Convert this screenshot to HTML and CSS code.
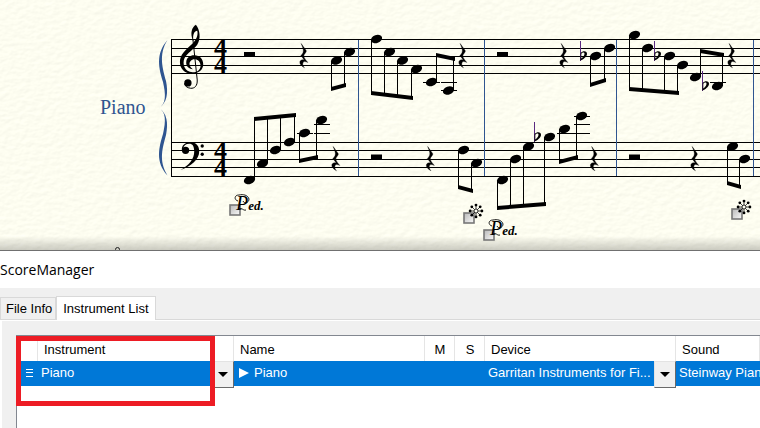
FILE: index.html
```html
<!DOCTYPE html>
<html lang="en">
<head>
    <meta charset="UTF-8">
    <meta name="viewport" content="width=device-width, initial-scale=1.0">
    <title>ScoreManager</title>
    <link rel="stylesheet" href="styles.css">
</head>
<body>
    <div class="score">
        <svg class="score-page" viewBox="0 0 760 250" role="img" aria-label="Piano score">
            <defs>
                <filter id="paper" x="0" y="0" width="100%" height="100%" color-interpolation-filters="sRGB">
                    <feTurbulence type="fractalNoise" baseFrequency="0.14 0.22" numOctaves="3" seed="4"/>
                    <feDiffuseLighting lighting-color="#fefef1" surfaceScale="0.12" diffuseConstant="1.15">
                        <feDistantLight azimuth="240" elevation="60"/>
                    </feDiffuseLighting>
                </filter>
                <linearGradient id="shade" x1="0" y1="0" x2="0" y2="1">
                    <stop offset="0" stop-color="#000" stop-opacity="0"/>
                    <stop offset="1" stop-color="#000" stop-opacity="0.2"/>
                </linearGradient>
                <linearGradient id="handleFill" x1="0" y1="0" x2="1" y2="1">
                    <stop offset="0" stop-color="#b8b8b8"/>
                    <stop offset="1" stop-color="#fafafa"/>
                </linearGradient>
                <ellipse id="note" rx="5.8" ry="4" transform="rotate(-20)"/>
                <rect id="half" width="11" height="4.5"/>
                <path id="rest" stroke="#000" transform="scale(.333)" d="M5 0L20 21C23 26 12 32 13 38C14 44 19 49 25 57C17 53 11 53 10 59C9 65 12 69 15 73C6 68 0 62 1 55C3 49 9 47 15 50L4 36C10 31 13 24 11 17C10 10 6 5 5 0Z"/>
                <g id="flat">
                    <path d="M.5 0V20" stroke="#5a2a80" fill="none"/>
                    <path fill-rule="evenodd" d="M.6 12C3 9.400 7.200 9.700 7 13C6.800 16 3.500 18 .4 19.800ZM1.300 12.800V17.600C3 16.400 4.600 14.600 4.500 12.600C4.400 10.800 2.500 11.200 1.300 12.800Z"/>
                </g>
                <g id="star">
                    <path d="M0-6V6M-6 0H6M-4.300-4.300L4.300 4.300M4.300-4.300L-4.300 4.300" stroke="#000" stroke-width="0.7"/>
                    <circle r="2" fill="#fffff3" stroke="#000" stroke-width="0.8"/>
                    <circle cy="-5.900" r="1.400"/><circle cy="5.900" r="1.400"/>
                    <circle cx="-5.900" r="1.400"/><circle cx="5.900" r="1.400"/>
                    <circle cx="-4.200" cy="-4.200" r="1.400"/><circle cx="4.200" cy="-4.200" r="1.400"/>
                    <circle cx="-4.200" cy="4.200" r="1.400"/><circle cx="4.200" cy="4.200" r="1.400"/>
                </g>
                <rect id="handle" x="1" y="1" width="10" height="10" fill="url(#handleFill)" stroke="#777" stroke-width="1.600"/>
                <path id="swash" fill="none" stroke="#000" stroke-width="0.9" d="M3 7C-1 6-1 1 4 1C8 0 13 1 14 5C14 9 9 10 8 7M4 15C7 13 8 17 11 16"/>
            </defs>

            <rect width="760" height="250" filter="url(#paper)"/>
            <rect y="236" width="760" height="14" fill="url(#shade)"/>

            <!-- staves -->
            <path class="line" d="M171 39.500H760M171 48.500H760M171 56.500H760M171 65.500H760M171 73.500H760M171 142.500H760M171 150.500H760M171 159.500H760M171 167.500H760M171 176.500H760M171.500 39V177"/>
            <path class="barline" d="M358.500 40V176M484.500 40V176M616.500 40V176M753.500 40V176"/>
            <path class="brace" d="M167.500 40C158 55 163 69 166 81C168.500 93 167 103 159 108C167 113 168.500 123 166 135C163 147 158 160 167.500 175.500C155 162 159 147 163 134C166 121 166 112 159 108C166 104 166 95 163 82C159 69 155 54 167.500 40Z"/>
            <text class="staff-name" x="100" y="114">Piano</text>

            <!-- clefs and time signature -->
            <g transform="translate(90 20) scale(.333)">
                <path d="M309 62C300 38 306 22 318 14C330 28 334 56 322 74C312 88 292 98 284 114C276 132 284 156 308 157C322 157 331 150 332 138C332 126 324 118 314 118C304 118 298 126 299 134C300 141 304 145 309 148C296 146 288 138 289 126C290 113 300 106 313 106C330 106 340 118 340 133C340 150 326 161 306 161C284 161 270 146 270 126C270 104 286 90 304 74C318 62 326 46 322 32C314 32 307 44 311 62Z"/>
                <path d="M309 58L322 180C323 198 314 206 302 205C292 204 284 198 284 190" fill="none" stroke="#000" stroke-width="3"/>
                <circle cx="294" cy="189" r="11"/>
            </g>
            <g transform="translate(90 110) scale(.333)">
                <path d="M276 122C274 106 286 97 302 97C320 97 328 110 328 124C328 150 302 170 272 180C298 165 313 148 313 124C313 108 308 101 298 101C288 101 281 107 280 114Z"/>
                <circle cx="287" cy="121" r="11"/>
                <circle cx="337" cy="108" r="5"/>
                <circle cx="337" cy="133" r="5"/>
            </g>
            <g class="meter">
                <text x="214" y="56">4</text>
                <text x="214" y="73">4</text>
                <text x="214" y="159">4</text>
                <text x="214" y="176">4</text>
            </g>

            <!-- ledger lines -->
            <path class="line" d="M423 82.500H440M441 82.500H457M441 90.500H457M710 82.500H726M297 133.500H313M314 133.500H330M314 124.500H330M557 133.500H590M574 124.500H590M574 116.500H590"/>

            <!-- treble staff -->
            <use href="#half" x="244" y="52"/>
            <use href="#rest" x="299.500" y="43.500"/>
            <use href="#note" x="336.500" y="60.500"/>
            <use href="#note" x="349.500" y="52"/>
            <path class="line" d="M331.500 61V89M344.500 53V85"/>
            <path d="M331 87L346 83V87L331 91Z"/>

            <use href="#note" x="376.500" y="39"/>
            <use href="#note" x="389.500" y="52"/>
            <use href="#note" x="402.500" y="60.500"/>
            <use href="#note" x="416.500" y="69"/>
            <path class="line" d="M371.500 40V93M384.500 53V94M397.500 61V96M411.500 70V97"/>
            <path d="M371 91L413 96V100L371 95Z"/>
            <use href="#note" x="431.500" y="82"/>
            <use href="#note" x="448.500" y="90.500"/>
            <path class="line" d="M436.500 55V82M453.500 58V90"/>
            <path d="M436 53L455 57V61L436 57Z"/>
            <use href="#rest" x="458.500" y="43.500"/>

            <use href="#half" x="497" y="52"/>
            <use href="#rest" x="559.500" y="43.500"/>
            <use href="#flat" x="580" y="41"/>
            <use href="#note" x="595.500" y="56"/>
            <use href="#note" x="609.500" y="48"/>
            <path class="line" d="M590.500 57V84M604.500 49V80"/>
            <path d="M590 83L606 78V82L590 87Z"/>

            <use href="#note" x="634.500" y="35"/>
            <use href="#note" x="647.500" y="48"/>
            <use href="#flat" x="654" y="41"/>
            <use href="#note" x="669.500" y="56"/>
            <use href="#note" x="682.500" y="65"/>
            <path class="line" d="M629.500 36V89M642.500 49V90M664.500 57V92M677.500 66V93"/>
            <path d="M629 87L679 91V95L629 91Z"/>
            <use href="#note" x="695.500" y="77"/>
            <use href="#flat" x="702" y="71"/>
            <use href="#note" x="717.500" y="86"/>
            <path class="line" d="M700.500 50V77M722.500 54V86"/>
            <path d="M700 49L724 53V57L700 53Z"/>
            <use href="#rest" x="727.500" y="43.500"/>

            <!-- bass staff -->
            <use href="#note" x="249.500" y="180"/>
            <use href="#note" x="262.500" y="163.500"/>
            <use href="#note" x="275.500" y="150"/>
            <use href="#note" x="289.500" y="142"/>
            <path class="line" d="M254.500 118V180M267.500 117V163M280.500 116V150M294.500 115V142"/>
            <path d="M254 117L296 113V117L254 121Z"/>
            <use href="#note" x="304.500" y="133"/>
            <use href="#note" x="321.500" y="120"/>
            <path class="line" d="M299.500 134V161M316.500 121V157"/>
            <path d="M299 159L318 155V159L299 163Z"/>
            <use href="#rest" x="331.500" y="146.500"/>

            <use href="#half" x="371" y="154.500"/>
            <use href="#rest" x="426" y="146.500"/>
            <use href="#note" x="463.500" y="150"/>
            <use href="#note" x="476.500" y="163"/>
            <path class="line" d="M458.500 151V187M471.500 164V191"/>
            <path d="M458 185L473 189V193L458 189Z"/>

            <use href="#note" x="502.500" y="180"/>
            <use href="#note" x="515.500" y="159"/>
            <use href="#note" x="528.500" y="146.500"/>
            <use href="#flat" x="534" y="122"/>
            <use href="#note" x="549.500" y="137"/>
            <path class="line" d="M497.500 181V208M510.500 160V207M523.500 147V206M544.500 138V204"/>
            <path d="M497 206L546 202V206L497 210Z"/>
            <use href="#note" x="564.500" y="129"/>
            <use href="#note" x="581.500" y="116"/>
            <path class="line" d="M559.500 130V162M576.500 117V157"/>
            <path d="M559 160L578 155V159L559 164Z"/>
            <use href="#rest" x="590" y="146.500"/>

            <use href="#half" x="629" y="154.500"/>
            <use href="#rest" x="690.500" y="146.500"/>
            <use href="#note" x="732.500" y="146.500"/>
            <use href="#note" x="744.500" y="159"/>
            <path class="line" d="M727.500 147V183M739.500 160V187"/>
            <path d="M727 181L741 185V189L727 185Z"/>

            <!-- pedal marks -->
            <use href="#handle" x="229" y="204"/>
            <use href="#swash" x="235" y="194"/>
            <text class="pedal" x="236" y="210"><tspan class="pedal-cap">P</tspan>ed.</text>
            <use href="#handle" x="463" y="212"/>
            <use href="#star" x="476" y="211"/>
            <use href="#handle" x="483" y="229"/>
            <use href="#swash" x="489" y="219"/>
            <text class="pedal" x="490" y="235"><tspan class="pedal-cap">P</tspan>ed.</text>
            <use href="#handle" x="731" y="208"/>
            <use href="#star" x="744" y="207"/>
            <circle cx="117.500" cy="249.500" r="2" fill="none" stroke="#222"/>
        </svg>
    </div>

    <main class="manager">
        <h1 class="title">ScoreManager</h1>
        <div class="content">
            <div class="tabs" role="tablist">
                <button class="tab" role="tab" aria-selected="false">File Info</button>
                <button class="tab active" role="tab" aria-selected="true">Instrument List</button>
            </div>
            <div class="panel">
                <div class="list">
                    <table>
                        <colgroup>
                            <col class="col-handle">
                            <col class="col-instrument">
                            <col class="col-name">
                            <col class="col-flag">
                            <col class="col-flag">
                            <col class="col-device">
                            <col>
                        </colgroup>
                        <thead>
                            <tr>
                                <th></th>
                                <th>Instrument</th>
                                <th>Name</th>
                                <th class="flag">M</th>
                                <th class="flag">S</th>
                                <th>Device</th>
                                <th>Sound</th>
                            </tr>
                        </thead>
                        <tbody>
                            <tr>
                                <td class="grip">
                                    <svg width="7" height="10" viewBox="0 0 7 10"><path d="M0 .5H7M0 3.500H7M0 7.500H7" stroke="#fff"/></svg>
                                </td>
                                <td>
                                    <div class="combo">
                                        <select aria-label="Instrument"><option>Piano</option></select>
                                    </div>
                                </td>
                                <td>
                                    <div class="name">
                                        <button class="expand" aria-label="Expand Piano">
                                            <svg width="10" height="10" viewBox="0 0 10 10"><path d="M0 0L10 5L0 10Z" fill="#fff"/></svg>
                                        </button>
                                        <span>Piano</span>
                                    </div>
                                </td>
                                <td></td>
                                <td></td>
                                <td>
                                    <div class="combo">
                                        <select aria-label="Device"><option>Garritan Instruments for Fi...</option></select>
                                    </div>
                                </td>
                                <td class="sound">Steinway Piano</td>
                            </tr>
                        </tbody>
                    </table>
                    <div class="highlight"></div>
                </div>
            </div>
        </div>
    </main>
</body>
</html>
```
FILE: styles.css
```css
* {
    box-sizing: border-box;
}
body {
    display: flex;
    flex-direction: column;
    height: 100vh;
    margin: 0;
    overflow: hidden;
    background: #fff;
    color: #000;
    font-family: "Liberation Sans", Arial, sans-serif;
    font-size: 13px;
}

/* score */
.score {
    flex: none;
}
.score-page {
    display: block;
    width: 100%;
}
.line {
    fill: none;
    stroke: #000;
}
.barline {
    fill: none;
    stroke: #2f5590;
}
.brace,
.staff-name {
    fill: #2f5590;
}
.staff-name {
    font: 20px "Liberation Serif", serif;
}
.meter {
    font: bold 26px "Liberation Serif", serif;
}
.pedal {
    font: italic bold 13px "Liberation Serif", serif;
}
.pedal-cap {
    font-size: 20px;
    font-weight: normal;
}

/* score manager window */
.manager {
    display: flex;
    flex: 1;
    flex-direction: column;
    min-height: 0;
    border-top: 1px solid #707070;
}
.title {
    margin: 0;
    height: 37px;
    font: 14px/37px "Open Sans", sans-serif;
}
.content {
    display: flex;
    flex: 1;
    flex-direction: column;
    min-height: 0;
    padding-top: 8px;
    background: #f0f0f0;
}
.tabs {
    display: flex;
    align-items: flex-end;
    height: 24px;
    border-bottom: 1px solid #d9d9d9;
}
.tab {
    height: 22px;
    padding: 0 3px 0 5px;
    border: 1px solid #d9d9d9;
    border-bottom: none;
    background: #f0f0f0;
    color: #000;
    font: inherit;
}
.tab.active {
    height: 24px;
    margin-bottom: -1px;
    padding: 0 6px;
    background: #fff;
}
.panel {
    flex: 1;
    min-height: 0;
    padding: 14px 0 0 14px;
    border-top: 1px solid #fff;
    border-left: 2px solid #fff;
}
.list {
    position: relative;
    height: 100%;
    border-top: 1px solid #828790;
    border-left: 1px solid #828790;
    background: #fff;
}
table {
    width: 100%;
    table-layout: fixed;
    border-collapse: collapse;
}
.col-handle {
    width: 21px;
}
.col-instrument {
    width: 196px;
}
.col-name,
.col-device {
    width: 191px;
}
.col-flag {
    width: 30px;
}
th {
    height: 25px;
    padding: 2px 0 0 6px;
    box-shadow: inset -1px 0 #e5e5e5;
    font-weight: normal;
    text-align: left;
}
th.flag {
    padding: 2px 0 0;
    text-align: center;
}
td {
    height: 25px;
    padding: 0;
    background: #0078d7;
    color: #fff;
    white-space: nowrap;
}
.grip {
    padding-left: 9px;
}
.grip svg {
    display: block;
}
.sound {
    padding: 0 0 2px 3px;
    overflow: hidden;
}
.combo {
    position: relative;
    height: 25px;
}
.combo select {
    display: block;
    width: 100%;
    height: 25px;
    padding: 0 20px 2px 3px;
    border: none;
    border-radius: 0;
    appearance: none;
    background: #0078d7;
    color: #fff;
    font: inherit;
}
/* drop-down button */
.combo::before {
    content: "";
    position: absolute;
    top: 0;
    right: 0;
    width: 20px;
    height: 25px;
    border: 1px solid;
    border-color: #e3e3e3 #696969 #696969 #e3e3e3;
    background: #f0f0f0;
    pointer-events: none;
}
.combo::after {
    content: "";
    position: absolute;
    top: 11px;
    right: 6px;
    border: 5px solid transparent;
    border-top-color: #000;
    border-bottom: none;
    pointer-events: none;
}
.name {
    display: flex;
    align-items: center;
    gap: 5px;
    padding: 0 0 2px 5px;
}
.expand {
    padding: 0;
    border: none;
    background: none;
}
.expand svg {
    display: block;
}
.highlight {
    position: absolute;
    top: 0;
    left: -1px;
    width: 199px;
    height: 70px;
    border: 5px solid #ed1c24;
    pointer-events: none;
}
```
